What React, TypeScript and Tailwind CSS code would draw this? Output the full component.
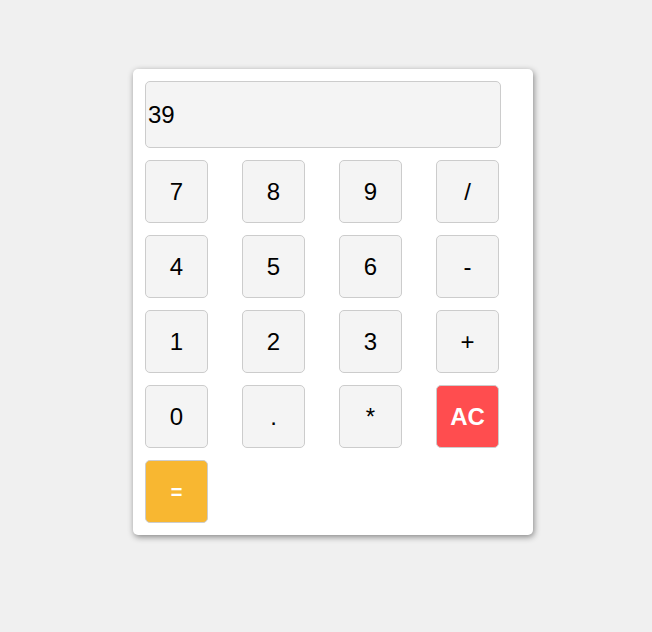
import React from "react";

const keys = ["7", "8", "9", "/", "4", "5", "6", "-", "1", "2", "3", "+", "0", ".", "*", "AC", "="];

export default function App() {
  return (
    <div className="min-h-[632px] bg-[#f0f0f0] pt-[69px] pl-[133px]" style={{ fontFamily: '"Liberation Sans", Arial, sans-serif' }}>
      <div className="w-[400px] rounded-[5px] bg-white p-[12px] shadow-[1px_2px_6px_rgba(0,0,0,0.45)]">
        <div className="flex h-[67px] w-[356px] items-center rounded-[5px] border border-[#cccccc] bg-[#f4f4f4] px-[2px] text-[24px] text-black">
          39
        </div>
        <div className="mt-[12px] grid grid-cols-[repeat(4,63px)] gap-x-[34px] gap-y-[12px]">
          {keys.map((k) => {
            const cls =
              k === "AC"
                ? "bg-[#ff4d4f] text-white font-bold text-[24px]"
                : k === "="
                ? "bg-[#f8b731] text-white font-bold text-[20px]"
                : "bg-[#f4f4f4] text-black text-[24px]";
            return (
              <button
                key={k}
                className={`flex h-[63px] w-[63px] items-center justify-center rounded-[5px] border border-[#cccccc] ${cls}`}
              >
                {k}
              </button>
            );
          })}
        </div>
      </div>
    </div>
  );
}
